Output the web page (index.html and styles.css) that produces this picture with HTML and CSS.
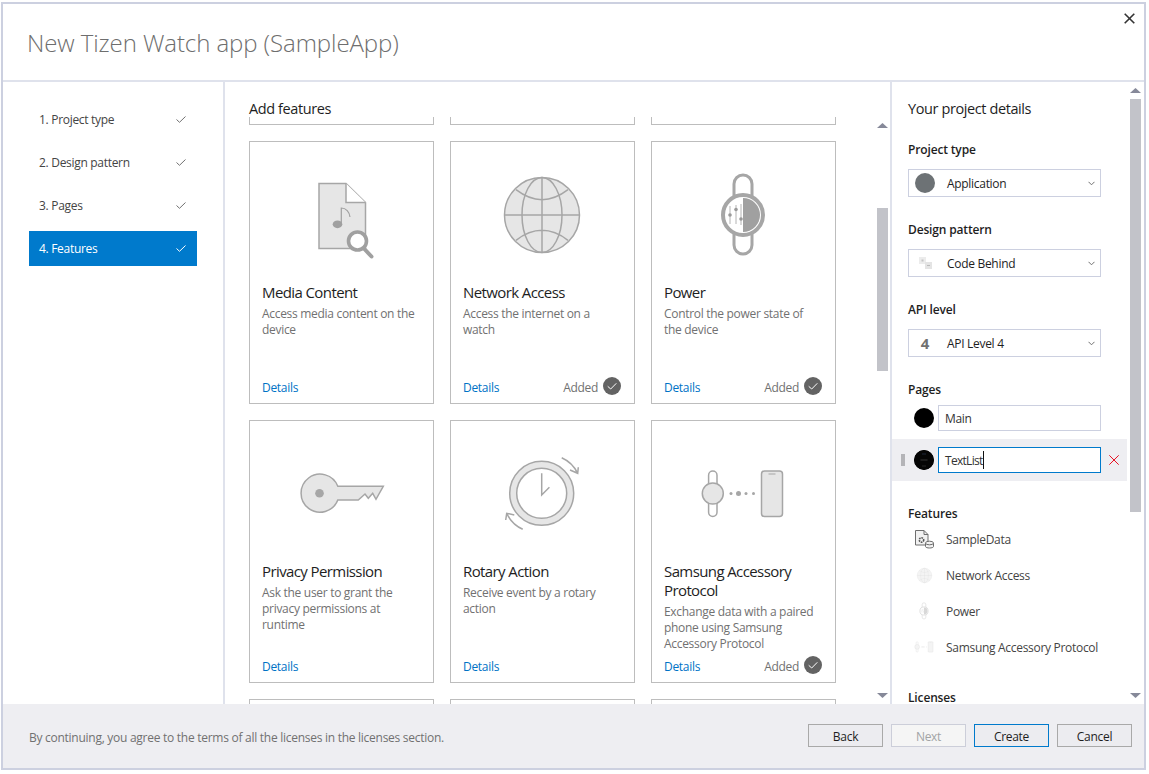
FILE: index.html
```html
<!DOCTYPE html>
<html lang="en">
<head>
  <meta charset="UTF-8">
  <title>New Tizen Watch app (SampleApp)</title>
  <link rel="stylesheet" href="styles.css">
</head>
<body>

  <svg class="defs" width="0" height="0">
    <defs>
      <symbol id="ico-globe" viewBox="0 0 88 88">
        <circle cx="44" cy="44" r="37.5" fill="#e6e6e6"/>
        <g fill="none" stroke="#a6a6a6" stroke-width="1.5">
          <circle cx="44" cy="44" r="37.5"/>
          <ellipse cx="44" cy="44" rx="20" ry="37.5"/>
          <path d="M44 6.5V81.5M6.5 44H81.5M18 18.7Q44 38.7 70 18.7M18 69.3Q44 49.3 70 69.3"/>
        </g>
      </symbol>
      <symbol id="ico-power" viewBox="0 0 88 88">
        <rect x="35" y="4" width="18" height="79" rx="9" fill="#fff" stroke="#a6a6a6" stroke-width="3"/>
        <circle cx="44" cy="44" r="20" fill="#fff" stroke="#a6a6a6" stroke-width="4"/>
        <path d="M44 27A17 17 0 0 1 44 61Z" fill="#a0a0a0"/>
        <path d="M31 35V53M37 34V53M42 33V54" stroke="#b4b4b4" stroke-width="1"/>
        <circle cx="31" cy="44" r="1.8" fill="#999"/>
        <circle cx="37" cy="38.5" r="1.8" fill="#999"/>
        <circle cx="42" cy="48" r="1.8" fill="#999"/>
      </symbol>
      <symbol id="ico-samsung" viewBox="0 0 88 88">
        <rect x="9.6" y="21" width="8.4" height="45.5" rx="4.2" fill="#fff" stroke="#a6a6a6" stroke-width="1.5"/>
        <circle cx="13.8" cy="43.5" r="10.5" fill="#e6e6e6" stroke="#a6a6a6" stroke-width="1.5"/>
        <rect x="62.5" y="21" width="21" height="45.5" rx="3" fill="#e6e6e6" stroke="#a6a6a6" stroke-width="1.5"/>
        <path d="M69.5 24H76.5" stroke="#a6a6a6" stroke-width="1"/>
        <circle cx="32" cy="43.5" r="1.5" fill="#a6a6a6"/>
        <circle cx="39.5" cy="43.5" r="2.5" fill="#a6a6a6"/>
        <circle cx="47" cy="43.5" r="1.5" fill="#a6a6a6"/>
        <circle cx="54.5" cy="43.5" r="1.5" fill="#a6a6a6"/>
      </symbol>
      <symbol id="ico-check" viewBox="0 0 10 7">
        <path d="M0.5 3.5L3.5 6.3L9.5 0.5" fill="none" stroke="currentColor" stroke-width="1"/>
      </symbol>
      <symbol id="ico-chevron" viewBox="0 0 7 5">
        <path d="M0.5 0.8L3.5 3.8L6.5 0.8" fill="none" stroke="#717171" stroke-width="1"/>
      </symbol>
    </defs>
  </svg>

  <div class="dialog">

    <header class="dialog-header">
      <h1>New Tizen Watch app (SampleApp)</h1>
      <svg class="close" width="11" height="11" viewBox="0 0 11 11">
        <path d="M0.7 0.7L10.3 10.3M10.3 0.7L0.7 10.3" stroke="#333" stroke-width="1.6"/>
      </svg>
    </header>

    <div class="dialog-main">

      <nav class="steps">
        <div class="step"><span>1. Project type</span><svg class="step-check"><use href="#ico-check"/></svg></div>
        <div class="step"><span>2. Design pattern</span><svg class="step-check"><use href="#ico-check"/></svg></div>
        <div class="step"><span>3. Pages</span><svg class="step-check"><use href="#ico-check"/></svg></div>
        <div class="step active"><span>4. Features</span><svg class="step-check"><use href="#ico-check"/></svg></div>
      </nav>

      <section class="features">
        <div class="features-pane">
          <h2>Add features</h2>
          <div class="cards-view">
            <div class="cards">
              <div class="card"></div>
              <div class="card"></div>
              <div class="card"></div>

              <div class="card">
                <svg class="card-icon" viewBox="0 0 88 88">
                  <path d="M22 12.5H49L68.5 31.5V77.5H22Z" fill="#e6e6e6" stroke="#a6a6a6" stroke-width="1.5"/>
                  <path d="M49 12.5V31.5H68.5" fill="#fff" stroke="#a6a6a6" stroke-width="1.5"/>
                  <ellipse cx="40.5" cy="53.3" rx="4.8" ry="3.9" fill="#a0a0a0"/>
                  <path d="M44.3 52V37C49 37 52.5 41 53 46" fill="none" stroke="#a0a0a0" stroke-width="1.2"/>
                  <path d="M66.5 77L74.5 85.5" stroke="#a0a0a0" stroke-width="4" stroke-linecap="round"/>
                  <circle cx="60.5" cy="70" r="9" fill="#fff" stroke="#a0a0a0" stroke-width="3.6"/>
                </svg>
                <h3>Media Content</h3>
                <p>Access media content on the device</p>
                <div class="card-foot"><a>Details</a></div>
              </div>

              <div class="card">
                <svg class="card-icon" viewBox="0 0 88 88"><use href="#ico-globe"/></svg>
                <h3>Network Access</h3>
                <p>Access the internet on a watch</p>
                <div class="card-foot">
                  <a>Details</a>
                  <span class="added">Added<svg class="added-mark" viewBox="0 0 18 18"><circle cx="9" cy="9" r="9" fill="#636363"/><path d="M4.7 9.3L7.7 12L13.3 6.3" fill="none" stroke="#fff" stroke-width="1"/></svg></span>
                </div>
              </div>

              <div class="card">
                <svg class="card-icon" viewBox="0 0 88 88"><use href="#ico-power"/></svg>
                <h3>Power</h3>
                <p>Control the power state of the device</p>
                <div class="card-foot">
                  <a>Details</a>
                  <span class="added">Added<svg class="added-mark" viewBox="0 0 18 18"><circle cx="9" cy="9" r="9" fill="#636363"/><path d="M4.7 9.3L7.7 12L13.3 6.3" fill="none" stroke="#fff" stroke-width="1"/></svg></span>
                </div>
              </div>

              <div class="card">
                <svg class="card-icon" viewBox="0 0 88 88">
                  <path d="M40.8 36.3H86.3L79 49.3L75.7 43.3L71.3 48.3L68 44L61.3 50H40.8A19 19 0 1 1 40.8 36.3Z" fill="#e6e6e6" stroke="#a6a6a6" stroke-width="1.5"/>
                  <circle cx="22.5" cy="43.3" r="4.3" fill="#a6a6a6"/>
                </svg>
                <h3>Privacy Permission</h3>
                <p>Ask the user to grant the privacy permissions at runtime</p>
                <div class="card-foot"><a>Details</a></div>
              </div>

              <div class="card">
                <svg class="card-icon" viewBox="0 0 88 88">
                  <circle cx="43.7" cy="43.3" r="28.5" fill="#fff" stroke="#e6e6e6" stroke-width="7"/>
                  <g fill="none" stroke="#a6a6a6" stroke-width="1.5">
                    <circle cx="43.7" cy="43.3" r="32"/>
                    <circle cx="43.7" cy="43.3" r="25"/>
                    <path d="M43.7 23.3V45L51.4 37.3"/>
                    <path d="M63.7 7.7Q74.5 12.5 79.7 23.3M72 20L79.7 23.3L80.3 17.3"/>
                    <path d="M24.7 79.3Q13.5 74 8.7 63.3M16.3 65L8.7 63.3L7.7 70"/>
                  </g>
                </svg>
                <h3>Rotary Action</h3>
                <p>Receive event by a rotary action</p>
                <div class="card-foot"><a>Details</a></div>
              </div>

              <div class="card">
                <svg class="card-icon" viewBox="0 0 88 88"><use href="#ico-samsung"/></svg>
                <h3>Samsung Accessory Protocol</h3>
                <p>Exchange data with a paired phone using Samsung Accessory Protocol</p>
                <div class="card-foot">
                  <a>Details</a>
                  <span class="added">Added<svg class="added-mark" viewBox="0 0 18 18"><circle cx="9" cy="9" r="9" fill="#636363"/><path d="M4.7 9.3L7.7 12L13.3 6.3" fill="none" stroke="#fff" stroke-width="1"/></svg></span>
                </div>
              </div>

              <div class="card"></div>
              <div class="card"></div>
              <div class="card"></div>
            </div>
          </div>
        </div>
        <div class="scrollbar features-bar">
          <svg class="arrow" viewBox="0 0 11 5"><path d="M5.5 0L11 5H0Z"/></svg>
          <div class="thumb"></div>
          <svg class="arrow down" viewBox="0 0 11 5"><path d="M0 0H11L5.5 5Z"/></svg>
        </div>
      </section>

      <aside class="details">
        <div class="details-pane">
          <h2>Your project details</h2>

          <h4>Project type</h4>
          <div class="select">
            <span class="select-icon"><span class="type-dot"></span></span>
            <span class="select-text">Application</span>
            <svg class="chevron"><use href="#ico-chevron"/></svg>
          </div>

          <h4>Design pattern</h4>
          <div class="select">
            <span class="select-icon">
              <svg width="16" height="14" viewBox="0 0 16 14">
                <rect x="2" y="1" width="7" height="7" fill="#ececec"/>
                <rect x="4.5" y="3.5" width="2" height="2" fill="#c4c4c4"/>
                <rect x="8" y="6" width="7" height="7" fill="#e4e4e4"/>
                <rect x="10" y="9" width="3" height="1" fill="#bbb"/>
              </svg>
            </span>
            <span class="select-text">Code Behind</span>
            <svg class="chevron"><use href="#ico-chevron"/></svg>
          </div>

          <h4>API level</h4>
          <div class="select">
            <span class="select-icon api-num">4</span>
            <span class="select-text">API Level 4</span>
            <svg class="chevron"><use href="#ico-chevron"/></svg>
          </div>

          <h4 class="pages-label">Pages</h4>
          <div class="page-list">
            <div class="page-row">
              <span class="grip hidden"></span>
              <span class="page-thumb"></span>
              <div class="page-input">Main</div>
            </div>
            <div class="page-row selected">
              <span class="grip"></span>
              <svg class="page-thumb" viewBox="0 0 20 20">
                <circle cx="10" cy="10" r="10" fill="#050505"/>
                <rect x="6.5" y="9.4" width="7" height="1.2" fill="#2e2e2e"/>
                <rect x="8" y="3.5" width="4" height="1" fill="#1c2638"/>
                <rect x="8" y="15.5" width="4" height="1" fill="#262626"/>
              </svg>
              <div class="page-input focused">TextList<span class="caret"></span></div>
              <svg class="remove" width="10" height="10" viewBox="0 0 10 10">
                <path d="M0.3 0.3L9.7 9.7M9.7 0.3L0.3 9.7" stroke="#e81123" stroke-width="1"/>
              </svg>
            </div>
          </div>

          <h4 class="features-label">Features</h4>
          <ul class="feature-list">
            <li>
              <span class="feature-icon">
                <svg width="20" height="20" viewBox="0 0 20 20">
                  <path d="M1.5 1.5H10L14 5.5V16H1.5Z" fill="#f1f1f1" stroke="#6e6e6e" stroke-width="1"/>
                  <path d="M10 1.5V5.5H14" fill="none" stroke="#6e6e6e" stroke-width="1"/>
                  <circle cx="7.5" cy="11" r="2.2" fill="none" stroke="#555" stroke-width="1.6" stroke-dasharray="1.5 .8"/>
                  <path d="M11.5 14V17.5C11.5 19.5 19.5 19.5 19.5 17.5V14" fill="#f1f1f1" stroke="#6e6e6e" stroke-width="1"/>
                  <ellipse cx="15.5" cy="14" rx="4" ry="1.8" fill="#f1f1f1" stroke="#6e6e6e" stroke-width="1"/>
                </svg>
              </span>
              SampleData
            </li>
            <li>
              <span class="feature-icon faded"><svg width="17" height="17"><use href="#ico-globe"/></svg></span>
              Network Access
            </li>
            <li>
              <span class="feature-icon faded"><svg width="18" height="18"><use href="#ico-power"/></svg></span>
              Power
            </li>
            <li>
              <span class="feature-icon faded"><svg width="20" height="20"><use href="#ico-samsung"/></svg></span>
              Samsung Accessory Protocol
            </li>
          </ul>

          <h4>Licenses</h4>
        </div>
        <div class="scrollbar details-bar">
          <svg class="arrow" viewBox="0 0 11 5"><path d="M5.5 0L11 5H0Z"/></svg>
          <div class="thumb"></div>
          <svg class="arrow down" viewBox="0 0 11 5"><path d="M0 0H11L5.5 5Z"/></svg>
        </div>
      </aside>

    </div>

    <footer class="dialog-footer">
      <span class="terms">By continuing, you agree to the terms of all the licenses in the licenses section.</span>
      <div class="buttons">
        <button>Back</button>
        <button disabled>Next</button>
        <button class="primary">Create</button>
        <button>Cancel</button>
      </div>
    </footer>

  </div>

</body>
</html>
```

FILE: styles.css
```css
* {
  box-sizing: border-box;
}

html, body {
  height: 100%;
  overflow: hidden;
}

body {
  margin: 0;
  padding: 2px 0 0 1px;
  background: #fff;
  font-family: "Open Sans", "Noto Sans", sans-serif;
  font-size: 12px;
  letter-spacing: -0.3px;
  color: #1e1e1e;
}

h1, h2, h3, h4, p, ul {
  margin: 0;
  padding: 0;
  font-weight: normal;
}

.defs {
  position: absolute;
}

.dialog {
  display: flex;
  flex-direction: column;
  width: 1145px;
  height: 768px;
  border: 2px solid #ccd0e0;
  background: #fff;
}

/* header */
.dialog-header {
  position: relative;
  flex: none;
  height: 78px;
  padding: 22px 0 0 24px;
  border-bottom: 2px solid #dfe2ec;
}

.dialog-header h1 {
  font-size: 24px;
  font-weight: 300;
  line-height: 33px;
  letter-spacing: -0.08px;
  color: #6e6e6e;
}

.close {
  position: absolute;
  top: 9px;
  right: 9px;
}

.dialog-main {
  flex: 1;
  display: flex;
  min-height: 0;
}

/* left steps */
.steps {
  flex: none;
  display: flex;
  flex-direction: column;
  gap: 8px;
  width: 222px;
  padding: 20px 0 0 26px;
  border-right: 2px solid #dfe2ec;
}

.step {
  display: flex;
  align-items: center;
  justify-content: space-between;
  width: 168px;
  height: 35px;
  padding: 0 11px 0 10px;
  color: #444;
}

.step.active {
  background: #007acc;
  color: #fff;
}

.step-check {
  width: 10px;
  height: 7px;
  color: #717171;
}

.step.active .step-check {
  color: #fff;
}

/* middle */
.features {
  flex: 1;
  display: flex;
  min-width: 0;
}

.features-pane {
  flex: 1;
  display: flex;
  flex-direction: column;
  min-width: 0;
  padding: 18px 0 0 24px;
}

.features-pane h2 {
  font-size: 14.5px;
  line-height: 17px;
  letter-spacing: -0.4px;
}

.cards-view {
  flex: 1;
  overflow: hidden;
}

.cards {
  display: grid;
  grid-template-columns: repeat(3, 185px);
  grid-auto-rows: 263px;
  gap: 16px;
  margin-top: -255px;
}

.card {
  display: flex;
  flex-direction: column;
  padding: 29px 13px 7px 12px;
  border: 1px solid #bdbdbd;
}

.card-icon {
  flex: none;
  width: 88px;
  height: 88px;
  margin: 0 0 24px 35px;
}

.card h3 {
  font-size: 15px;
  line-height: 19px;
  letter-spacing: -0.6px;
}

.card p {
  margin-top: 4px;
  line-height: 16px;
  color: #717171;
}

.card-foot {
  display: flex;
  align-items: center;
  justify-content: space-between;
  margin-top: auto;
  height: 18px;
}

.card-foot a {
  color: #0072c6;
}

.added {
  display: flex;
  align-items: center;
  gap: 5px;
  color: #717171;
}

.added-mark {
  width: 18px;
  height: 18px;
  margin-top: -2px;
}

/* scrollbars */
.scrollbar {
  flex: none;
  display: flex;
  flex-direction: column;
  width: 11px;
}

.arrow {
  flex: none;
  width: 11px;
  height: 5px;
  fill: #868999;
}

.arrow.down {
  margin-top: auto;
  margin-bottom: 6px;
}

.thumb {
  background: #c2c3c9;
}

.features-bar {
  margin-right: 2px;
  padding-top: 41px;
}

.features-bar .thumb {
  height: 163px;
  margin-top: 80px;
}

.details-bar {
  margin: 0 3px;
  padding-top: 6px;
}

.details-bar .thumb {
  height: 413px;
  margin-top: 6px;
}

/* right side */
.details {
  flex: none;
  display: flex;
  width: 254px;
  border-left: 2px solid #dfe2ec;
}

.details-pane {
  flex: 1;
  min-width: 0;
  overflow: hidden;
  padding-top: 17px;
}

.details-pane h2 {
  padding-left: 16px;
  font-size: 14.5px;
  line-height: 20px;
  letter-spacing: -0.4px;
}

.details-pane h4 {
  margin: 25px 0 11px 16px;
  font-weight: 600;
  line-height: 16px;
  letter-spacing: -0.15px;
}

.details-pane h2 + h4 {
  margin-top: 23px;
}

.details-pane .pages-label {
  margin-bottom: 7px;
}

.details-pane .features-label {
  margin-bottom: -1px;
}

.select {
  display: flex;
  align-items: center;
  width: 193px;
  height: 28px;
  margin-left: 16px;
  border: 1px solid #ccd0e0;
}

.select-icon {
  flex: none;
  display: flex;
  align-items: center;
  justify-content: center;
  width: 32px;
}

.type-dot {
  width: 20px;
  height: 20px;
  border-radius: 50%;
  background: #6d7275;
}

.api-num {
  font-size: 15px;
  font-weight: 700;
  color: #717171;
}

.select-text {
  flex: 1;
  margin-left: 6px;
}

.chevron {
  width: 7px;
  height: 5px;
  margin-right: 5px;
}

.page-list {
  display: flex;
  flex-direction: column;
  gap: 8px;
}

.page-row {
  display: flex;
  align-items: center;
  padding-left: 9px;
}

.page-row.selected {
  padding-top: 8px;
  padding-bottom: 8px;
  background: #eeeef2;
}

.grip {
  flex: none;
  width: 4px;
  height: 12px;
  margin-right: 9px;
  background: #b4b4b8;
}

.grip.hidden {
  background: none;
}

.page-thumb {
  flex: none;
  width: 20px;
  height: 20px;
  margin-right: 4px;
  border-radius: 50%;
  background: #000;
}

.page-input {
  display: flex;
  align-items: center;
  flex: none;
  width: 163px;
  height: 26px;
  padding-left: 6px;
  border: 1px solid #ccd0e0;
  background: #fff;
  color: #333;
}

.page-input.focused {
  border-color: #007acc;
  letter-spacing: -0.7px;
}

.caret {
  width: 1px;
  height: 18px;
  background: #111;
}

.remove {
  flex: none;
  margin-left: 8px;
}

.feature-list {
  list-style: none;
}

.feature-list li {
  display: flex;
  align-items: center;
  height: 36px;
  padding-left: 22px;
  color: #444;
}

.feature-icon {
  display: flex;
  align-items: center;
  justify-content: center;
  width: 20px;
  margin-right: 12px;
}

.faded {
  opacity: 0.4;
}

/* footer */
.dialog-footer {
  flex: none;
  display: flex;
  align-items: center;
  justify-content: space-between;
  height: 64px;
  padding: 0 12px 1px 26px;
  background: #eeeef2;
}

.terms {
  margin-top: 4px;
  letter-spacing: -0.27px;
  color: #717171;
}

.buttons {
  display: flex;
  gap: 8px;
}

button {
  width: 75px;
  height: 23px;
  padding: 1px 0 0;
  border: 1px solid #a9a9a9;
  border-radius: 0;
  background: #ececf0;
  font: inherit;
  letter-spacing: inherit;
  color: #1e1e1e;
}

button:disabled {
  border-color: #ccced9;
  background: #f5f5f5;
  color: #a2a4a5;
}

button.primary {
  border-color: #007acc;
}
```
